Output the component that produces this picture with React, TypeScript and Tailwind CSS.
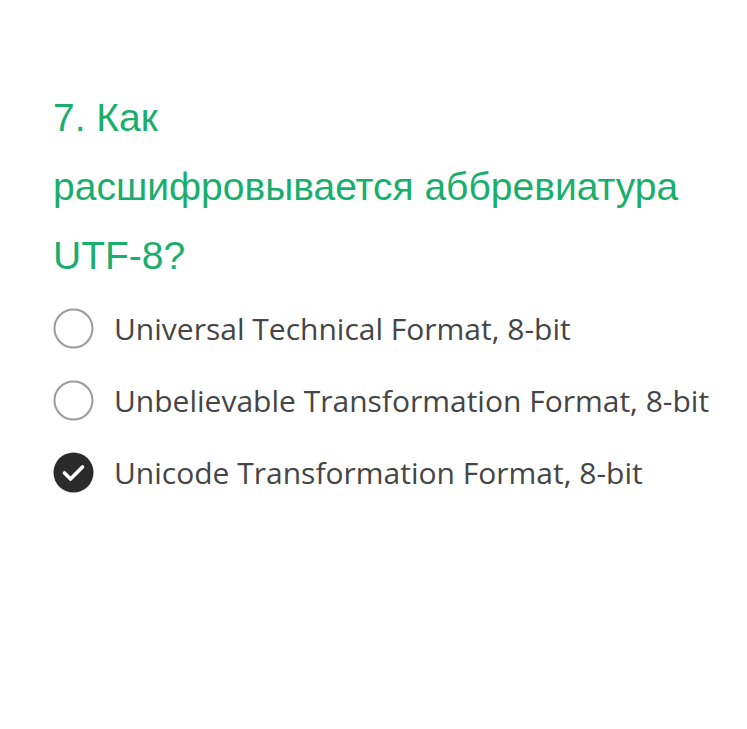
const OPTIONS = [
  { label: "Universal Technical Format, 8-bit", checked: false },
  { label: "Unbelievable Transformation Format, 8-bit", checked: false },
  { label: "Unicode Transformation Format, 8-bit", checked: true },
];

function Radio({ checked }: { checked: boolean }) {
  if (checked) {
    return (
      <svg width="41" height="41" viewBox="0 0 41 41" className="shrink-0">
        <circle cx="20.5" cy="20.5" r="20" fill="#2b2b2b" />
        <path
          d="M11.5 21 L17.5 27 L29.5 15"
          fill="none"
          stroke="#fff"
          strokeWidth="3.6"
          strokeLinecap="round"
          strokeLinejoin="round"
        />
      </svg>
    );
  }
  return (
    <svg width="41" height="41" viewBox="0 0 41 41" className="shrink-0">
      <circle cx="20.5" cy="20.5" r="19" fill="none" stroke="#9a9a9a" strokeWidth="2" />
    </svg>
  );
}

export default function App() {
  return (
    <div className="w-[747px] h-[729px] bg-white pl-[53px] pt-[83px]">
      {/* question */}
      <h1 className="text-[#1aae6c] text-[39px] leading-[69px] font-['Liberation_Sans',sans-serif] font-normal">
        7. Как
        <br />
        расшифровывается аббревиатура
        <br />
        UTF-8?
      </h1>

      {/* answers */}
      <div className="mt-[18px] flex flex-col gap-[31px]">
        {OPTIONS.map((opt, i) => (
          <div key={i} className="flex items-center gap-[20px]">
            <Radio checked={opt.checked} />
            <span className="text-[#454545] text-[30px] leading-[41px] font-normal font-['Open_Sans',sans-serif]">
              {opt.label}
            </span>
          </div>
        ))}
      </div>
    </div>
  );
}
